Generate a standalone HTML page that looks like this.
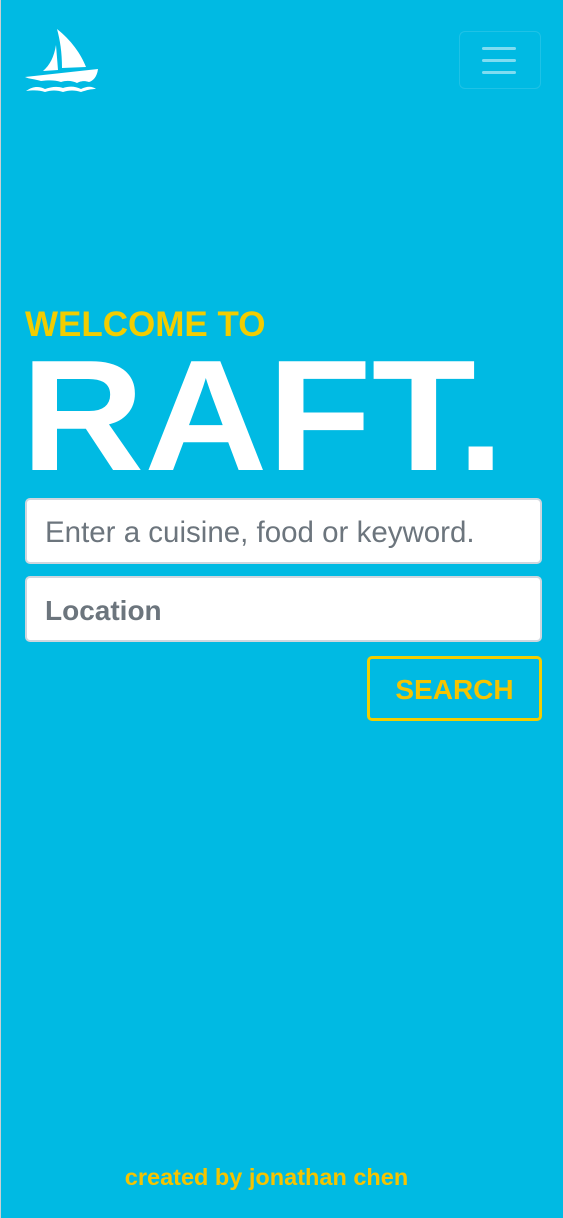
<!DOCTYPE html>
<html><head><style>
html,body{margin:0;padding:0}
body{width:563px;height:1218px;background:#00bae3;position:relative;overflow:hidden;font-family:"Liberation Sans",sans-serif;border-left:1px solid #c8d0d4;box-sizing:border-box}
.ham{position:absolute;left:458px;top:31px;width:82px;height:58px;border:1px solid rgba(255,255,255,0.12);border-radius:6px;box-sizing:border-box}
.ham i{position:absolute;left:22px;width:34px;height:3px;background:#7fdcf1;border-radius:2px}
.wel{position:absolute;left:24px;top:305px;font-size:35px;font-weight:bold;color:#f2cd00;white-space:nowrap}
.raft{position:absolute;left:20px;top:337px;font-size:158px;font-weight:bold;color:#fff;white-space:nowrap;line-height:1;transform:scaleX(1.08);transform-origin:0 0}
.inp{position:absolute;left:24px;width:517px;height:66px;background:#fff;border:2px solid #cfd6de;border-radius:5px;box-sizing:border-box;color:#6c757d;font-size:28px;padding-left:18px;padding-top:4px;line-height:58px;white-space:nowrap}
.btn{position:absolute;left:366px;top:656px;width:175px;height:65px;border:3px solid #f2cd00;border-radius:5px;box-sizing:border-box;color:#f5c400;font-weight:bold;font-size:28px;text-align:center;line-height:61px}
.foot{position:absolute;left:-16px;width:563px;top:1164px;text-align:center;color:#f5c400;font-weight:bold;font-size:23.5px}
</style></head><body>
<svg style="position:absolute;left:22px;top:28px" width="84" height="66" viewBox="22 28 84 66">
<path d="M56 29 C70 40 80 54 85 67 L61 68 C61 52 59 40 56 29 Z" fill="#fff"/>
<path d="M55 45 C53 57 49 65 42 71 L57 70 Z" fill="#fff"/>
<path d="M24 77 L97 69 C96 77 92 81 88 82 C82 80 78 82 76 83 C72 81 66 80 60 82 C54 80 48 80 40 81 C34 79 28 79 24 77 Z" fill="#fff"/>
<path d="M25 91 C32 86 38 86 44 89 C50 87 56 86 62 88 C68 86 74 86 80 89 C86 86 91 86 95 89 C90 89 86 90 80 92 C74 90 68 90 62 92 C56 90 50 90 44 92 C38 90 32 90 25 91 Z" fill="#fff"/>
</svg>
<div class="ham"><i style="top:15px"></i><i style="top:27px"></i><i style="top:39px"></i></div>
<div class="wel">WELCOME TO</div>
<div class="raft">RAFT.</div>
<div class="inp" style="top:498px;font-size:29.5px">Enter a cuisine, food or keyword.</div>
<div class="inp" style="top:576px;font-weight:bold">Location</div>
<div class="btn">SEARCH</div>
<div class="foot">created by jonathan chen</div>
</body></html>
